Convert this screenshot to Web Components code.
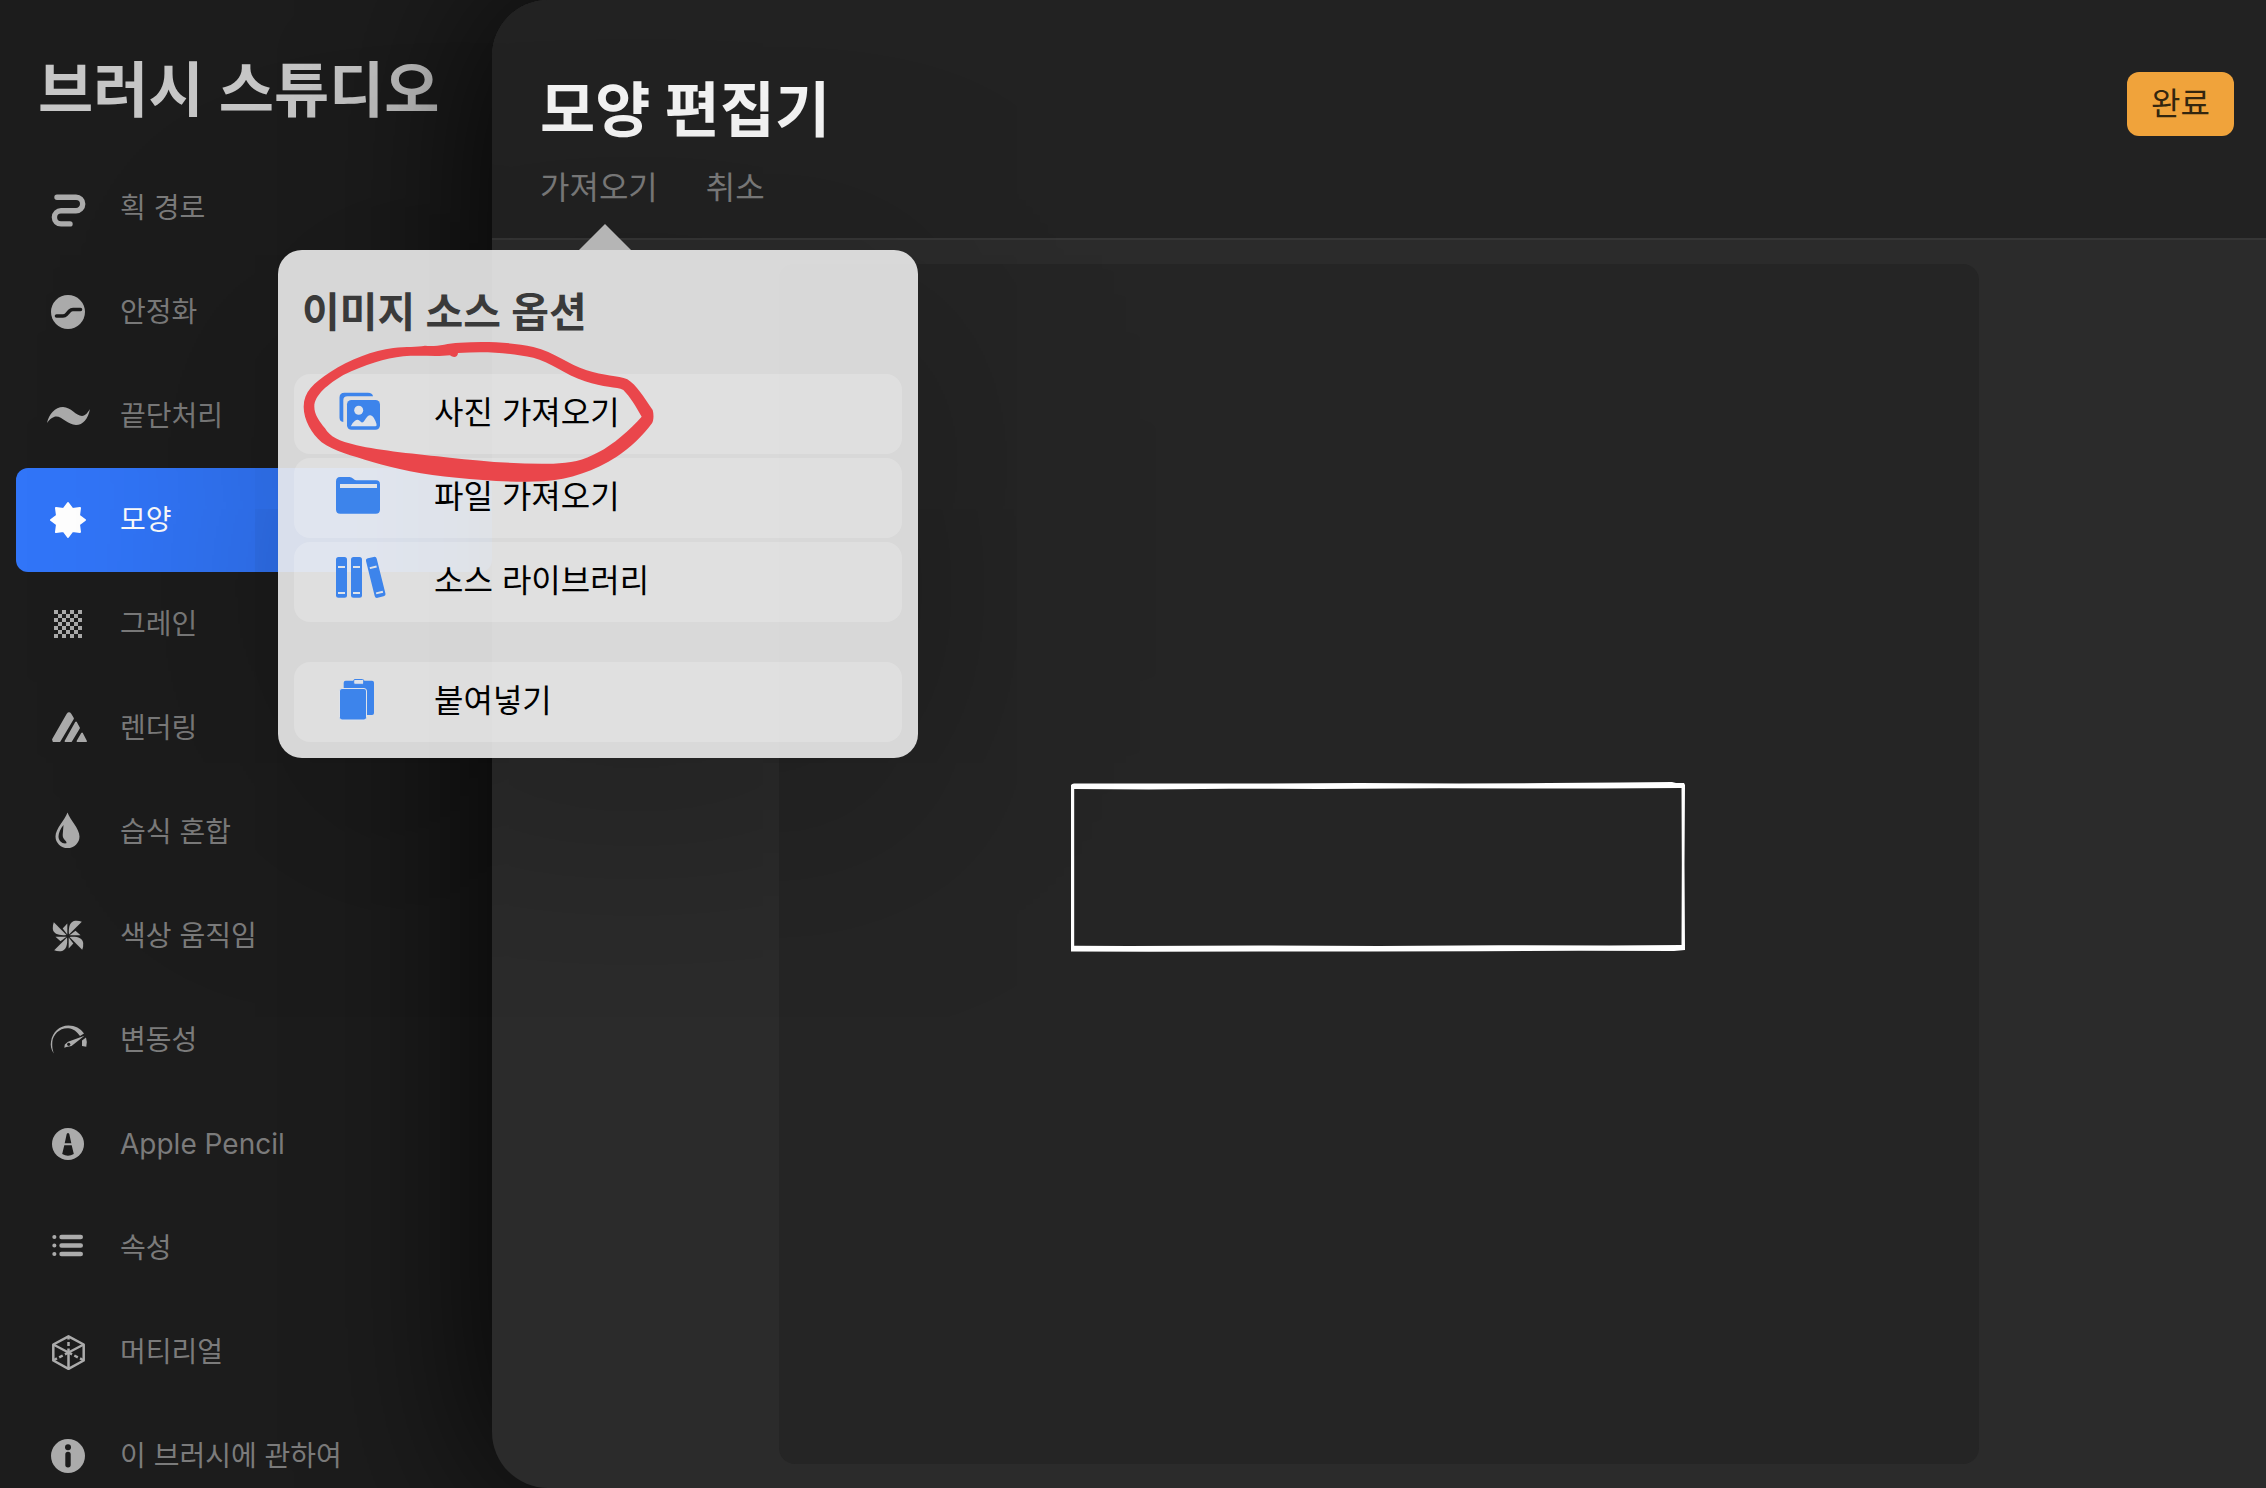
<!DOCTYPE html>
<html lang="ko">
<head>
<meta charset="utf-8">
<meta name="viewport" content="width=device-width, initial-scale=1">
<title>브러시 스튜디오</title>
<style>
    body {
        margin: 0;
        background: #1c1c1c;
        font-family: Inter, "Noto Sans CJK KR", sans-serif;
    }
</style>
</head>
<body>
<brush-studio>
    <studio-sidebar slot="sidebar" heading="브러시 스튜디오">
        <nav-item icon="path">획 경로</nav-item>
        <nav-item icon="stabilize">안정화</nav-item>
        <nav-item icon="taper">끝단처리</nav-item>
        <nav-item icon="shape" selected>모양</nav-item>
        <nav-item icon="grain">그레인</nav-item>
        <nav-item icon="render">렌더링</nav-item>
        <nav-item icon="wet">습식 혼합</nav-item>
        <nav-item icon="color">색상 움직임</nav-item>
        <nav-item icon="dynamics">변동성</nav-item>
        <nav-item icon="pencil">Apple Pencil</nav-item>
        <nav-item icon="list">속성</nav-item>
        <nav-item icon="material">머티리얼</nav-item>
        <nav-item icon="info">이 브러시에 관하여</nav-item>
    </studio-sidebar>
    <shape-editor slot="editor">
        <span slot="title">모양 편집기</span>
        <span slot="import">가져오기</span>
        <span slot="cancel">취소</span>
        <span slot="done">완료</span>
        <source-popover slot="popover" heading="이미지 소스 옵션">
            <source-option icon="photo">사진 가져오기</source-option>
            <source-option icon="folder">파일 가져오기</source-option>
            <source-option icon="library">소스 라이브러리</source-option>
            <source-option icon="paste" separate>붙여넣기</source-option>
        </source-popover>
        <shape-canvas slot="canvas"></shape-canvas>
    </shape-editor>
</brush-studio>

<script>
// --knock is the colour of the parts cut out of an icon
const ICONS = {
    path: `<path d="M13 13.3H32a6.7 6.7 0 0 1 0 13.4H17a6.6 6.6 0 0 0 0 13.2H26" fill="none" stroke="currentColor" stroke-width="5.4" stroke-linecap="round"/>`,
    stabilize: `<circle cx="24" cy="24" r="17"/><path d="M12.5 28H19q2 0 3.3-1.4L25.5 23Q27 21.5 29 21.5H36.5" fill="none" stroke="var(--knock)" stroke-width="3.6" stroke-linecap="round"/>`,
    taper: `<path d="M3 31C5 22 11 15 19 15C27 15 32 24 38 24C41.5 24 44 20 46 17C44 27 39 33 32 33C23 33 17 22.5 10 25C7 26 5 28 3 31Z"/>`,
    shape: `<path d="M24 7L28.5 13L36 12L35 19.5L41 24L35 28.5L36 36L28.5 35L24 41L19.5 35L12 36L13 28.5L7 24L13 19.5L12 12L19.5 13Z" stroke="currentColor" stroke-width="2" stroke-linejoin="round"/>`,
    grain: `<defs><pattern id="check" x="10" y="10" width="8" height="8" patternUnits="userSpaceOnUse"><path d="M0 0h4v4h-4zM4 4h4v4h-4z"/></pattern></defs><rect x="10" y="10" width="28" height="28" fill="url(#check)"/>`,
    render: `<path d="M9.5 37.2H15.5L29 14.5L26.5 10.2Q25 8.2 23.5 10.2L9 35.5ZM21.5 37.2H27L35 24L32 18.5ZM33.5 37.2H42L38 29.5Z" stroke="currentColor" stroke-width="1.8" stroke-linejoin="round"/>`,
    wet: `<path d="M23.5 4.5C26 12 35.5 20.5 35.5 28.5A12 11.5 0 0 1 11.5 28.5C11.5 20.5 21 12 23.5 4.5Z"/><path d="M19.5 17C16.5 20.5 14.5 25 14.5 28.5C14.5 33 18.5 36.2 22.5 35.3C23 32.5 18.7 32 18.7 27Z" fill="var(--knock)"/>`,
    color: [0, 90, 180, 270].map(a => `<g transform="rotate(${a} 24 24)"><path d="M25 22.5C24.2 15 26 9.5 31 8.8Q35 8.5 37.8 9.8Z"/><path d="M23.3 11.5L18.7 16.5L23.3 22.5Z"/></g>`).join(''),
    dynamics: `<path d="M9.8 37.5C7 33.5 6.3 29.5 7 25.5C8.5 16 15.5 9.6 24.5 9.6C31 9.6 36.5 12.5 40 17.5L36 20C33 15.5 29 12.6 24.5 12.2C16 11.5 9 18 8.3 26C8 30.5 8.5 34 9.8 37.5ZM38 24.5L42 21.5Q43.5 26 42.3 30.8L38 30Z"/><path d="M20.3 31.8L20.8 28.5L24 25.8L40.5 19.8L27.5 30L22.5 31Z"/><circle cx="24.7" cy="28.3" r="1.6" fill="var(--knock)"/>`,
    pencil: `<circle cx="24" cy="24" r="16"/><path d="M22.7 14Q24 12 25.3 14L27.3 23.3H20.7ZM20.3 25.2H27.7L29.8 34Q24 37.5 18.2 34Z" fill="var(--knock)"/>`,
    list: `<g stroke="currentColor" stroke-width="4.4" stroke-linecap="round"><path d="M17.5 13H36.8M17.5 21.5H36.8M17.5 30H36.8"/><path d="M10.3 13h0.1M10.3 21.5h0.1M10.3 30h0.1" stroke-width="4"/></g>`,
    material: `<g fill="none" stroke="currentColor" stroke-width="2.5" stroke-linejoin="round"><path d="M24.5 8.3L39.7 16.5V32.5L24.5 40.8L9.3 32.5V16.5Z"/><path d="M9.3 16.5L24.5 24.5L39.7 16.5M24.5 24.5V40.8"/><path d="M24.5 24.5V9M24.5 24.5L39 32M24.5 24.5L10 32" stroke-dasharray="4 2.5"/></g>`,
    info: `<circle cx="24" cy="24" r="17"/><g fill="var(--knock)"><circle cx="24" cy="15.2" r="3"/><rect x="21.3" y="19.8" width="5.4" height="15.6" rx="2.7"/></g>`,
    photo: `<path d="M7.3 35Q3.5 34.5 3.5 30.5V10.5Q3.5 5.7 8.5 5.7H32Q36.5 5.7 37 9.3H11.5Q7.3 9.3 7.3 13.5Z"/><rect x="11" y="13" width="33" height="29.7" rx="4.5"/><g fill="var(--knock)"><circle cx="22.7" cy="23.3" r="4.5"/><path d="M14.8 39.3Q15.5 36.5 19 33.8Q22 31.5 24.5 34.5Q26.5 37 28.5 33.5Q32 27.5 34.5 28.2Q38 29 40.5 37Q41 39.3 39.5 39.3Z"/></g>`,
    folder: `<path d="M0 10.5Q0 6 4 6H13.5Q15.5 6 17 7.6T20 9.3H40Q44 9.3 44 13.5V38.5Q44 42.7 39.8 42.7H4.2Q0 42.7 0 38.5Z"/><path d="M4 13H41V17H4Z" fill="var(--knock)"/>`,
    library: `<g id="book"><rect y="2" width="11" height="40.7" rx="2.5"/><path d="M2 12h7M2 38h7" stroke="var(--knock)" stroke-width="2"/></g><use href="#book" x="15"/><use href="#book" transform="translate(39.7 22.3) rotate(-14) translate(-5.5 -22.3)"/>`,
    paste: `<rect x="7.7" y="5.7" width="30.3" height="34.3" rx="2"/><rect x="17.7" y="4.5" width="10" height="4.8" rx="1.2" fill="var(--knock)" stroke="currentColor"/><rect x="3.5" y="13.5" width="27" height="31.5" rx="2.5" stroke="var(--knock)"/>`
};

class NavItem extends HTMLElement {
    constructor() {
        super();
        this.attachShadow({ mode: 'open' });
    }

    connectedCallback() {
        this.shadowRoot.innerHTML = `
            <style>
                :host { display: block; --knock: #1b1b1b; }
                a {
                    display: flex;
                    align-items: center;
                    gap: 28px;
                    height: 104px;
                    padding-left: 28px;
                    border-radius: 12px;
                    color: #7b7b7b;
                    font-size: 28px;
                    line-height: 40px;
                    text-decoration: none;
                    white-space: nowrap;
                }
                svg { flex: none; width: 48px; height: 48px; color: #ababab; }
                :host([selected]) a { background: #3175f8; }
                :host([selected]) a, :host([selected]) svg { color: #fff; }
            </style>
            <a href="#${this.getAttribute('icon')}">
                <svg viewBox="0 0 48 48" fill="currentColor" aria-hidden="true">${ICONS[this.getAttribute('icon')]}</svg>
                <slot></slot>
            </a>`;
    }
}

class StudioSidebar extends HTMLElement {
    constructor() {
        super();
        this.attachShadow({ mode: 'open' });
    }

    connectedCallback() {
        this.shadowRoot.innerHTML = `
            <style>
                :host { display: block; overflow: hidden; }
                h1 {
                    margin: 0;
                    padding: 54px 0 30px 38px;
                    color: #c6c6c6;
                    font-size: 60px;
                    font-weight: 600;
                    line-height: 72px;
                    white-space: nowrap;
                }
                nav { padding-left: 16px; }
            </style>
            <h1>${this.getAttribute('heading')}</h1>
            <nav><slot></slot></nav>`;
    }
}

class SourceOption extends HTMLElement {
    constructor() {
        super();
        this.attachShadow({ mode: 'open' });
    }

    connectedCallback() {
        this.shadowRoot.innerHTML = `
            <style>
                :host { display: block; --knock: #dfe3ea; }
                :host([separate]) { margin-top: 36px; }
                button {
                    display: flex;
                    align-items: center;
                    gap: 46px;
                    width: 100%;
                    height: 80px;
                    padding: 0 0 2px 42px;
                    border: 0;
                    border-radius: 16px;
                    background: rgba(255, 255, 255, 0.2);
                    color: #000;
                    font: 32px/48px Inter, "Noto Sans CJK KR", sans-serif;
                }
                svg { flex: none; width: 52px; height: 52px; color: #3d84eb; }
            </style>
            <button type="button">
                <svg viewBox="0 0 52 52" fill="currentColor" aria-hidden="true">${ICONS[this.getAttribute('icon')]}</svg>
                <slot></slot>
            </button>`;
    }
}

class SourcePopover extends HTMLElement {
    constructor() {
        super();
        this.attachShadow({ mode: 'open' });
    }

    connectedCallback() {
        this.shadowRoot.innerHTML = `
            <style>
                :host {
                    display: block;
                    position: relative;
                    box-sizing: border-box;
                    width: 640px;
                    padding: 0 16px 16px;
                    border-radius: 24px;
                    background: rgba(234, 234, 234, 0.91);
                    box-shadow: 0 40px 240px rgba(0, 0, 0, 0.3);
                }
                h2 {
                    margin: 0;
                    padding: 34px 8px;
                    color: #3a3a3a;
                    font-size: 41px;
                    font-weight: 600;
                    line-height: 56px;
                }
                .options { display: flex; flex-direction: column; gap: 4px; }
                .arrow {
                    position: absolute;
                    bottom: 100%;
                    left: 301px;
                    width: 52px;
                    height: 26px;
                    background: #b5b5b5;
                    clip-path: polygon(50% 0, 100% 100%, 0 100%);
                }
                .mark {
                    position: absolute;
                    top: 0;
                    left: 0;
                    width: 392px;
                    height: 240px;
                    pointer-events: none;
                }
            </style>
            <div class="arrow"></div>
            <h2>${this.getAttribute('heading')}</h2>
            <div class="options"><slot></slot></div>
            <svg class="mark" viewBox="24 120 1176 720" fill="#ea464b" fill-rule="evenodd" aria-hidden="true">
                <path d="M101 590C102 545 130 520 180 487C240 447 310 422 370 414C410 409 440 412 465 407C500 412 525 400 570 398C650 393 725 397 790 411C855 427 895 463 950 481C1000 498 1045 496 1072 508C1100 525 1120 560 1148 600C1152 615 1151 630 1146 640C1120 675 1080 715 1040 740C975 782 900 808 820 814C730 819 640 810 560 803C460 795 370 775 310 757C240 735 195 725 155 697C125 670 101 630 101 590Z
                    M133 590C133 555 175 522 220 495C285 464 345 445 400 439C450 435 500 441 540 436C552 445 563 441 564 429C650 424 720 428 790 443C840 456 885 493 945 514C1000 533 1040 530 1060 540C1080 560 1098 590 1115 620C1080 660 1030 703 985 727C940 752 900 760 850 761C740 764 630 752 540 743C440 733 330 722 260 706C205 693 180 680 165 655C148 632 133 615 133 590Z"/>
            </svg>`;
    }
}

class ShapeCanvas extends HTMLElement {
    constructor() {
        super();
        this.attachShadow({ mode: 'open' });
    }

    connectedCallback() {
        this.shadowRoot.innerHTML = `
            <style>
                :host {
                    display: block;
                    height: 100%;
                    aspect-ratio: 1;
                    border-radius: 16px;
                    background: #252525;
                }
                svg { display: block; width: 100%; height: 100%; }
            </style>
            <svg viewBox="0 0 1200 1200" fill="#fff" role="img" aria-label="모양">
                <path fill-rule="evenodd" d="M292 521Q293 519.500 295 519.500L380 519.500L470 519.500L580 519L680 519.500L770 519L840 518.500L893 518L897 519H905L906 521L905.500 600L906 686L895 687L800 686.800L700 687.300L590 687.500L480 687.500L370 687.800L292 687.500L292 600Z
                    M295.200 525V681.800L350 682L480 681.500L600 682L720 681.200L830 681.600L902.500 681L902.800 600L902.500 524L820 524.500L760 524.500L660 524.300L540 525L450 524.700L370 525.500Z"/>
            </svg>`;
    }
}

class ShapeEditor extends HTMLElement {
    constructor() {
        super();
        this.attachShadow({ mode: 'open' });
        this.shadowRoot.innerHTML = `
            <style>
                :host {
                    display: flex;
                    flex-direction: column;
                    position: relative;
                    border-radius: 56px 0 0 56px;
                    background: #2b2b2b;
                    box-shadow: 0 0 180px rgba(0, 0, 0, 0.9);
                }
                header {
                    position: relative;
                    z-index: 1;
                    display: flex;
                    justify-content: space-between;
                    align-items: flex-start;
                    box-sizing: border-box;
                    min-height: 240px;
                    padding: 72px 32px 0 48px;
                    border-bottom: 2px solid #363636;
                    border-radius: 56px 0 0 0;
                    background: #222;
                }
                h1 {
                    margin: 0;
                    color: #f4f4f4;
                    font-size: 60px;
                    font-weight: 700;
                    line-height: 76px;
                }
                .menu { display: flex; gap: 48px; margin-top: 16px; }
                .anchor { position: relative; }
                .popover {
                    position: absolute;
                    top: 86px;
                    left: -262px;
                }
                button {
                    display: block;
                    padding: 0;
                    border: 0;
                    background: none;
                    color: #7b7b7b;
                    font: 32px/48px Inter, "Noto Sans CJK KR", sans-serif;
                }
                .done {
                    padding: 8px 24px;
                    border-radius: 12px;
                    background: #f0a33b;
                    color: #33260f;
                }
                main {
                    display: flex;
                    flex: 1;
                    justify-content: center;
                    min-height: 0;
                    padding: 24px;
                }
            </style>
            <header>
                <div>
                    <h1><slot name="title"></slot></h1>
                    <div class="menu">
                        <div class="anchor">
                            <button type="button"><slot name="import"></slot></button>
                            <div class="popover"><slot name="popover"></slot></div>
                        </div>
                        <button type="button"><slot name="cancel"></slot></button>
                    </div>
                </div>
                <button type="button" class="done"><slot name="done"></slot></button>
            </header>
            <main><slot name="canvas"></slot></main>`;
    }
}

class BrushStudio extends HTMLElement {
    constructor() {
        super();
        this.attachShadow({ mode: 'open' });
        this.shadowRoot.innerHTML = `
            <style>
                :host {
                    display: grid;
                    grid-template-columns: 492px 1fr;
                    grid-template-rows: minmax(0, 1fr);
                    height: 100vh;
                    overflow: hidden;
                }
            </style>
            <slot name="sidebar"></slot>
            <slot name="editor"></slot>`;
    }
}

customElements.define('nav-item', NavItem);
customElements.define('studio-sidebar', StudioSidebar);
customElements.define('source-option', SourceOption);
customElements.define('source-popover', SourcePopover);
customElements.define('shape-canvas', ShapeCanvas);
customElements.define('shape-editor', ShapeEditor);
customElements.define('brush-studio', BrushStudio);
</script>
</body>
</html>
